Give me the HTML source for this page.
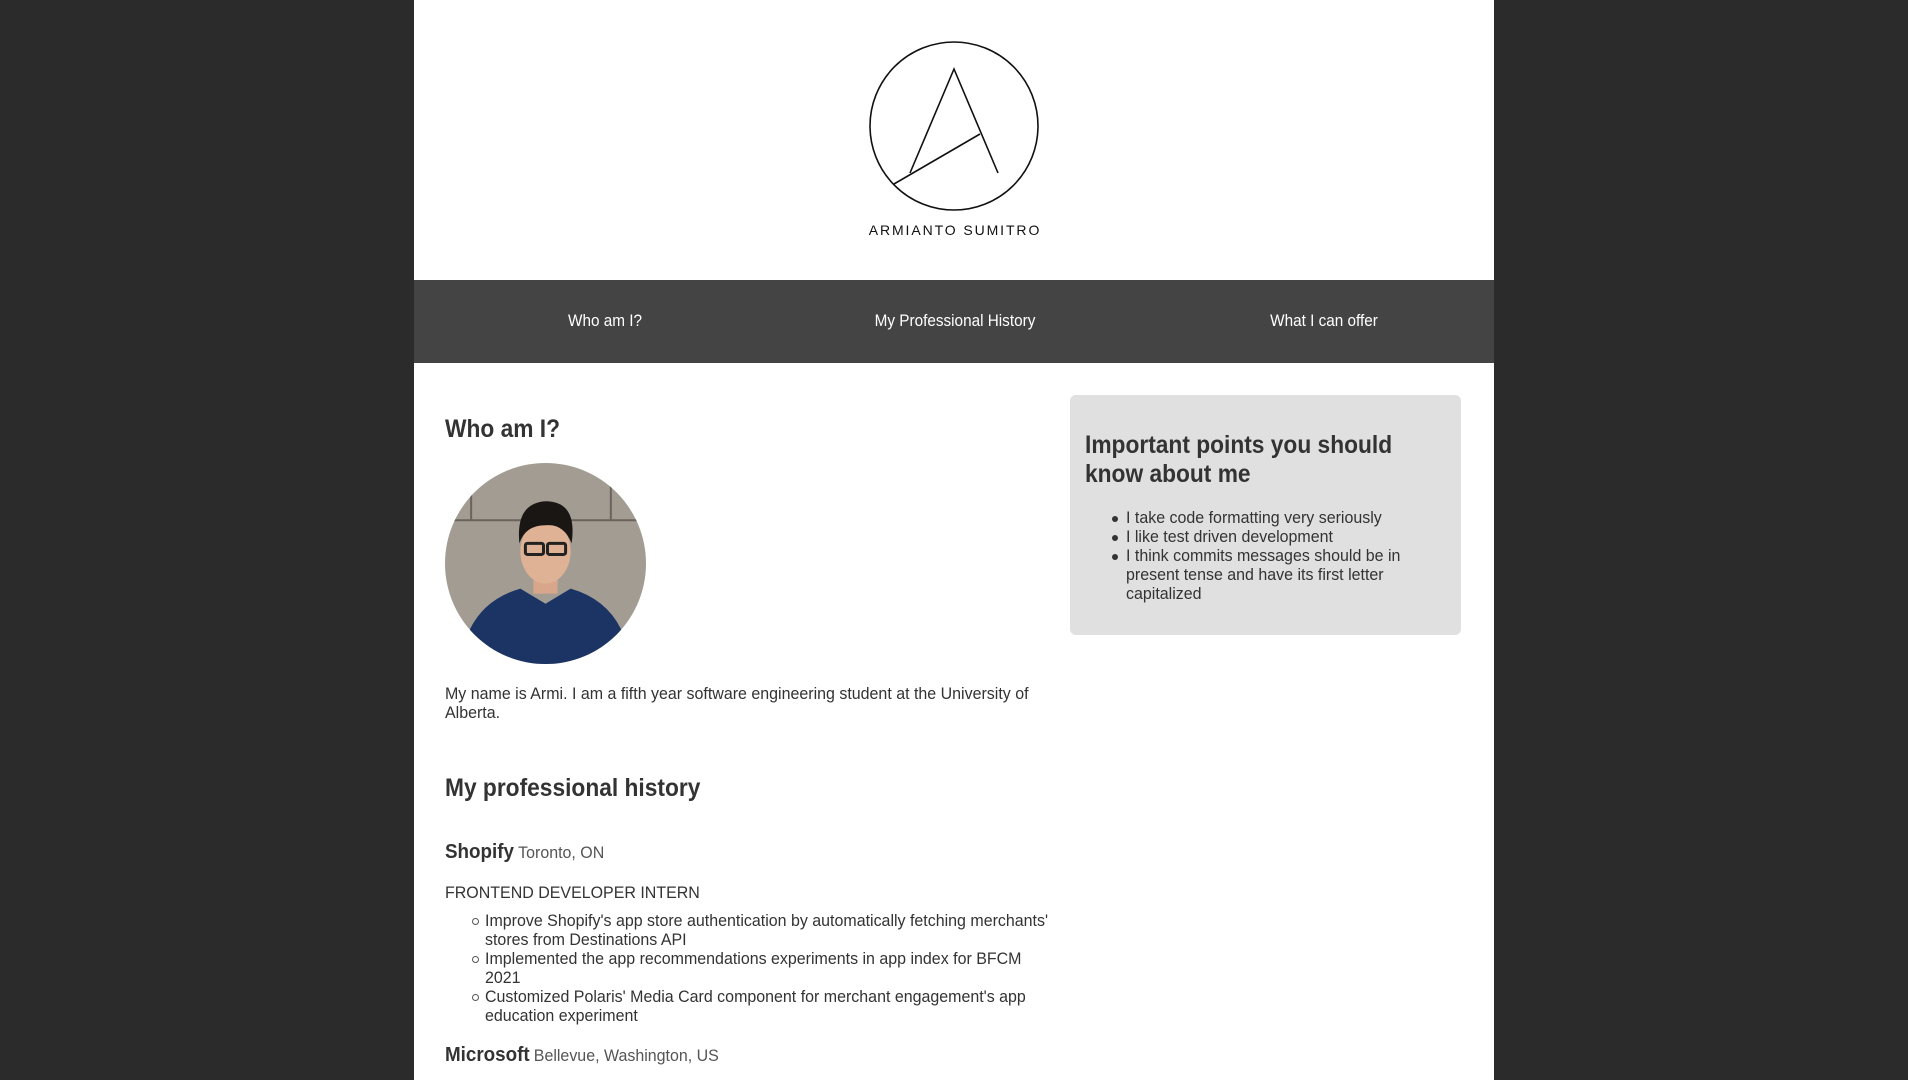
<!DOCTYPE html>
<html><head><meta charset="utf-8"><style>
*{margin:0;padding:0;box-sizing:border-box}
body{width:1908px;height:1080px;background:#2b2b2b;font-family:"Liberation Sans",sans-serif;color:#333;overflow:hidden;position:relative}
#panel{position:absolute;left:414px;top:0;width:1080px;height:1080px;background:#fff}
#nav{position:absolute;left:414px;top:280px;width:1080px;height:83px;background:#444}
.t{position:absolute;white-space:nowrap;transform:scaleX(0.94);transform-origin:left top}
.h{position:absolute;white-space:nowrap;transform:scaleX(0.91);transform-origin:left top}
.nv{position:absolute;top:311px;color:#fff;font-size:17px;white-space:nowrap;transform:translateX(-50%) scaleX(0.9)}
h2{font-size:25px;font-weight:bold;color:#333}
.p{font-size:17px;line-height:19px}
#box{position:absolute;left:1070px;top:395px;width:391px;height:240px;background:#e0e0e0;border-radius:6px}
.b{position:absolute;width:6px;height:6px;border-radius:50%;background:#333}
.c{position:absolute;width:7px;height:7px;border-radius:50%;border:1px solid #555}
</style></head><body>
<div id="panel"></div>
<svg style="position:absolute;left:860px;top:36px" width="190" height="180" viewBox="0 0 190 180">
<circle cx="94" cy="90" r="84" fill="none" stroke="#111" stroke-width="1.6"/>
<polyline points="50,137 94,33 138,137" fill="none" stroke="#111" stroke-width="1.6"/>
<line x1="34" y1="148" x2="120" y2="98" stroke="#111" stroke-width="1.6"/>
</svg>
<div style="position:absolute;left:820px;top:222px;width:270px;text-align:center;font-size:14px;letter-spacing:1.9px;color:#111;white-space:nowrap">ARMIANTO SUMITRO</div>
<div id="nav"></div>
<div class="nv" style="left:605px">Who am I?</div>
<div class="nv" style="left:955px">My Professional History</div>
<div class="nv" style="left:1324px">What I can offer</div>

<div class="h" style="left:445px;top:415px"><h2>Who am I?</h2></div>
<svg style="position:absolute;left:445px;top:463px" width="201" height="201" viewBox="0 0 200 200">
<defs><clipPath id="cp"><circle cx="100" cy="100" r="100"/></clipPath></defs>
<g clip-path="url(#cp)">
<rect width="200" height="200" fill="#a29c93"/>
<line x1="0" y1="57" x2="200" y2="57" stroke="#6b635c" stroke-width="2"/>
<line x1="26" y1="30" x2="26" y2="57" stroke="#6b635c" stroke-width="2"/>
<line x1="165" y1="20" x2="165" y2="57" stroke="#6b635c" stroke-width="2"/>
<path d="M20 200 L25 165 Q40 135 75 125 L100 140 L125 125 Q160 135 175 165 L180 200Z" fill="#1c3464"/>
<rect x="88" y="105" width="24" height="25" fill="#d8a68a"/>
<ellipse cx="100" cy="88" rx="25" ry="32" fill="#e0b295"/>
<path d="M74 80 Q70 40 100 38 Q132 38 126 80 Q118 60 100 62 Q80 62 74 80Z" fill="#1a1614"/>
<rect x="80" y="80" width="18" height="11" rx="2" fill="none" stroke="#222" stroke-width="3"/>
<rect x="102" y="80" width="18" height="11" rx="2" fill="none" stroke="#222" stroke-width="3"/>
</g></svg>
<div class="t p" style="left:445px;top:684px">My name is Armi. I am a fifth year software engineering student at the University of<br>Alberta.</div>

<div class="h" style="left:445px;top:774px"><h2>My professional history</h2></div>
<div class="t" style="left:445px;top:841px"><b style="font-size:20px">Shopify</b> <span style="font-size:17px;color:#555">Toronto, ON</span></div>
<div class="t p" style="left:445px;top:883px">FRONTEND DEVELOPER INTERN</div>
<div class="c" style="left:472px;top:918px"></div>
<div class="c" style="left:472px;top:956px"></div>
<div class="c" style="left:472px;top:994px"></div>
<div class="t p" style="left:485px;top:911px">Improve Shopify's app store authentication by automatically fetching merchants'<br>stores from Destinations API<br>Implemented the app recommendations experiments in app index for BFCM<br>2021<br>Customized Polaris' Media Card component for merchant engagement's app<br>education experiment</div>
<div class="t" style="left:445px;top:1044px"><b style="font-size:20px">Microsoft</b> <span style="font-size:17px;color:#555">Bellevue, Washington, US</span></div>

<div id="box"></div>
<div class="h" style="left:1085px;top:431px"><h2 style="line-height:29px">Important points you should<br>know about me</h2></div>
<div class="b" style="left:1112px;top:516px"></div>
<div class="b" style="left:1112px;top:535px"></div>
<div class="b" style="left:1112px;top:554px"></div>
<div class="t p" style="left:1126px;top:508px">I take code formatting very seriously<br>I like test driven development<br>I think commits messages should be in<br>present tense and have its first letter<br>capitalized</div>
</body></html>
